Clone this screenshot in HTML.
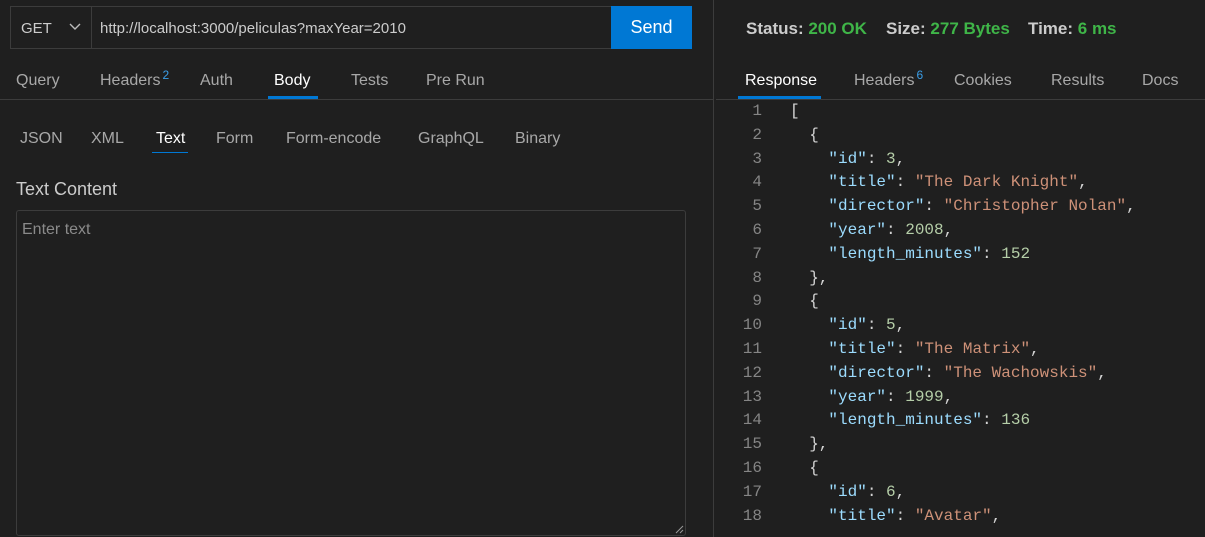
<!DOCTYPE html>
<html><head><style>
*{margin:0;padding:0;box-sizing:border-box}
body{width:1205px;height:537px;background:#1f1f1f;font-family:"Liberation Sans",sans-serif;color:#ccc;position:relative;overflow:hidden}
.abs{position:absolute}
.tab{position:absolute;font-size:16px;color:#a8a8a8;top:72px;line-height:18px}
.sub{position:absolute;font-size:16px;color:#a8a8a8;top:130px}
sup{color:#3a9ee8;font-size:12px;position:relative;top:-6px;margin-left:2px;vertical-align:baseline;line-height:0;display:inline-block}
.code{position:absolute;left:720px;top:100px;font-family:"Liberation Mono",monospace;font-size:16px;line-height:23.8px}
.ln{position:absolute;width:42px;text-align:right;color:#858585}
.k{color:#9cdcfe}.s{color:#ce9178}.n{color:#b5cea8}.p{color:#d4d4d4}
</style></head><body>
<div class="abs" style="left:10px;top:6px;width:682px;height:43px;border:1px solid #3c3c3c;background:#1f1f1f"></div>
<div class="abs" style="left:91px;top:6px;width:1px;height:43px;background:#3c3c3c"></div>
<div class="abs" style="left:21px;top:20px;font-size:15px;color:#ccc">GET</div>
<svg class="abs" style="left:68px;top:22px" width="14" height="10"><path d="M2 2 L7 7 L12 2" stroke="#bbb" stroke-width="1.4" fill="none"/></svg>
<div class="abs" style="left:100px;top:20px;font-size:15px;color:#ccc">http://localhost:3000/peliculas?maxYear=2010</div>
<div class="abs" style="left:611px;top:6px;width:81px;height:43px;background:#0078d4;color:#fff;font-size:18px;text-align:center;line-height:43px">Send</div>
<div class="tab" style="left:16px">Query</div>
<div class="tab" style="left:100px">Headers<sup>2</sup></div>
<div class="tab" style="left:200px">Auth</div>
<div class="tab" style="left:274px;color:#fff">Body</div>
<div class="tab" style="left:351px">Tests</div>
<div class="tab" style="left:426px">Pre Run</div>
<div class="abs" style="left:268px;top:96px;width:50px;height:3px;background:#0078d4"></div>
<div class="abs" style="left:0;top:99px;width:713px;height:1px;background:#3c3c3c"></div>
<div class="sub" style="left:20px">JSON</div>
<div class="sub" style="left:91px">XML</div>
<div class="sub" style="left:156px;color:#fff">Text</div>
<div class="sub" style="left:216px">Form</div>
<div class="sub" style="left:286px">Form-encode</div>
<div class="sub" style="left:418px">GraphQL</div>
<div class="sub" style="left:515px">Binary</div>
<div class="abs" style="left:152px;top:152px;width:36px;height:1px;background:#0078d4"></div>
<div class="abs" style="left:16px;top:179px;font-size:18px;color:#ccc">Text Content</div>
<div class="abs" style="left:16px;top:210px;width:670px;height:326px;border:1px solid #3c3c3c;border-radius:3px"></div>
<div class="abs" style="left:22px;top:221px;font-size:16px;color:#8a8a8a">Enter text</div>
<svg class="abs" style="left:674px;top:524px" width="10" height="10"><path d="M9 2 L2 9 M9 6 L6 9" stroke="#999" stroke-width="1"/></svg>
<div class="abs" style="left:713px;top:0;width:1px;height:537px;background:#3c3c3c"></div>
<div class="abs" style="left:746px;top:19px;font-size:17px;font-weight:bold;color:#ccc">Status: <span style="color:#3fb548">200 OK</span></div>
<div class="abs" style="left:886px;top:19px;font-size:17px;font-weight:bold;color:#ccc">Size: <span style="color:#3fb548">277 Bytes</span></div>
<div class="abs" style="left:1028px;top:19px;font-size:17px;font-weight:bold;color:#ccc">Time: <span style="color:#3fb548">6 ms</span></div>
<div class="tab" style="left:745px;color:#fff">Response</div>
<div class="tab" style="left:854px">Headers<sup>6</sup></div>
<div class="tab" style="left:954px">Cookies</div>
<div class="tab" style="left:1051px">Results</div>
<div class="tab" style="left:1142px">Docs</div>
<div class="abs" style="left:738px;top:96px;width:83px;height:3px;background:#0078d4"></div>
<div class="abs" style="left:716px;top:99px;width:489px;height:1px;background:#3c3c3c"></div>
<div class="code">
<div class="ln">1<br>2<br>3<br>4<br>5<br>6<br>7<br>8<br>9<br>10<br>11<br>12<br>13<br>14<br>15<br>16<br>17<br>18</div>
<pre style="position:absolute;left:70px;font:inherit;line-height:inherit" class="p">[
  {
    <span class="k">"id"</span>: <span class="n">3</span>,
    <span class="k">"title"</span>: <span class="s">"The Dark Knight"</span>,
    <span class="k">"director"</span>: <span class="s">"Christopher Nolan"</span>,
    <span class="k">"year"</span>: <span class="n">2008</span>,
    <span class="k">"length_minutes"</span>: <span class="n">152</span>
  },
  {
    <span class="k">"id"</span>: <span class="n">5</span>,
    <span class="k">"title"</span>: <span class="s">"The Matrix"</span>,
    <span class="k">"director"</span>: <span class="s">"The Wachowskis"</span>,
    <span class="k">"year"</span>: <span class="n">1999</span>,
    <span class="k">"length_minutes"</span>: <span class="n">136</span>
  },
  {
    <span class="k">"id"</span>: <span class="n">6</span>,
    <span class="k">"title"</span>: <span class="s">"Avatar"</span>,</pre>
</div>
</body></html>
